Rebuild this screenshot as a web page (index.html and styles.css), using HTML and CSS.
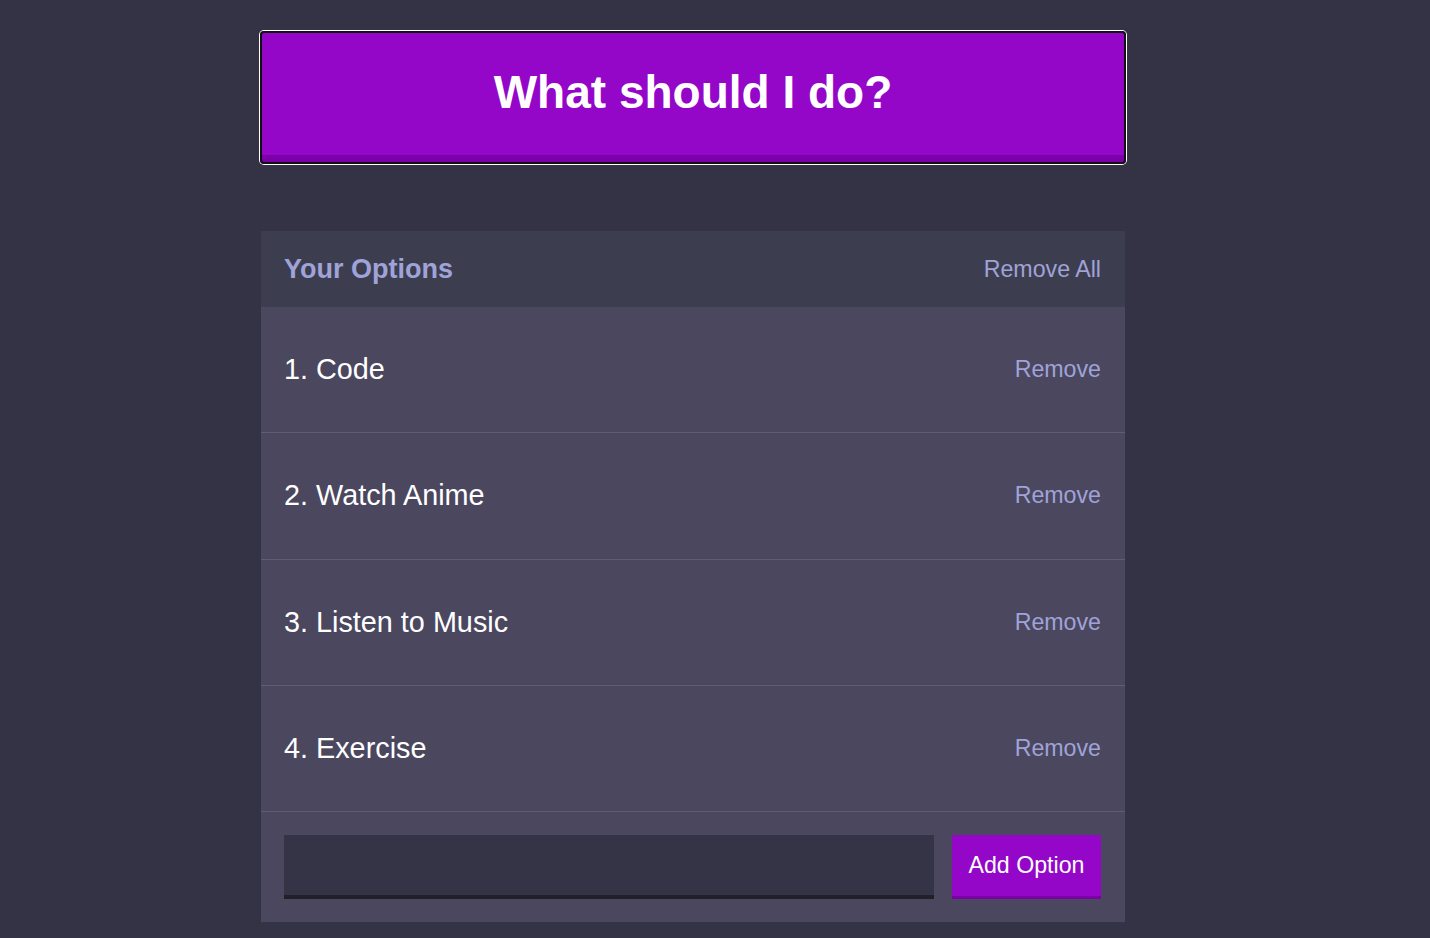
FILE: index.html
```html
<!DOCTYPE html>
<html>
<head>
<meta charset="utf-8">
<link rel="stylesheet" href="styles.css">
</head>
<body>
<div class="container">
  <button class="big-button">What should I do?</button>
  <div class="widget">
    <div class="widget-header">
      <h3 class="widget-header__title">Your Options</h3>
      <button class="link-button">Remove All</button>
    </div>
    <div class="option">
      <p class="option__text">1. Code</p>
      <button class="link-button">Remove</button>
    </div>
    <div class="option">
      <p class="option__text">2. Watch Anime</p>
      <button class="link-button">Remove</button>
    </div>
    <div class="option">
      <p class="option__text">3. Listen to Music</p>
      <button class="link-button">Remove</button>
    </div>
    <div class="option">
      <p class="option__text">4. Exercise</p>
      <button class="link-button">Remove</button>
    </div>
    <form class="add-option">
      <input class="add-option__input" type="text" name="option">
      <button class="button" type="button">Add Option</button>
    </form>
  </div>
</div>
</body>
</html>
```
FILE: styles.css
```css
* { box-sizing: border-box; }
html, body { margin: 0; padding: 0; }
body {
  background: #343245;
  font-family: "Liberation Sans", Arial, sans-serif;
  color: #ffffff;
  height: 938px;
  overflow: hidden;
}
.container {
  width: 864px;
  margin-left: 261px;
  padding-top: 31px;
}
.big-button {
  display: block;
  width: 866px;
  height: 133px;
  margin: 0 0 67px -1px;
  background: #9406c8;
  border: none;
  border-bottom: 9px solid #7c00aa;
  border-radius: 4px;
  color: #ffffff;
  font-family: "Liberation Sans", Arial, sans-serif;
  font-weight: bold;
  font-size: 46px;
  padding: 0 0 2px;
  outline: 2px solid #111111;
  outline-offset: -2px;
  box-shadow: 0 0 0 1px #ffffff;
}
.widget {
  background: #4a475f;
}
.widget-header {
  background: #3c3e50;
  height: 76px;
  display: flex;
  align-items: center;
  justify-content: space-between;
  padding: 0 24px 0 23px;
}
.widget-header__title {
  margin: 0;
  color: #a0a3d8;
  font-size: 27px;
  font-weight: bold;
}
.link-button {
  background: none;
  border: none;
  padding: 0;
  color: #a0a3d8;
  font-family: "Liberation Sans", Arial, sans-serif;
  font-size: 23.2px;
}
.option {
  height: 126.33px;
  display: flex;
  align-items: center;
  justify-content: space-between;
  padding: 0 24px 0 23px;
  border-bottom: 1px solid #5f5b78;
}
.option__text {
  margin: 0;
  color: #ffffff;
  font-size: 28.8px;
}
.add-option {
  display: flex;
  gap: 18px;
  padding: 23px 24px 23px 23px;
  margin: 0;
}
.add-option__input {
  flex: 1;
  height: 64px;
  background: #343446;
  border: none;
  border-bottom: 4px solid #202029;
  outline: none;
  color: #ffffff;
  font-size: 22px;
  padding: 0 12px;
}
.button {
  width: 149px;
  height: 64px;
  background: #9406c8;
  border: none;
  border-bottom: 3px solid #7c00aa;
  color: #ffffff;
  font-family: "Liberation Sans", Arial, sans-serif;
  font-size: 23.2px;
  padding: 0;
}
```
